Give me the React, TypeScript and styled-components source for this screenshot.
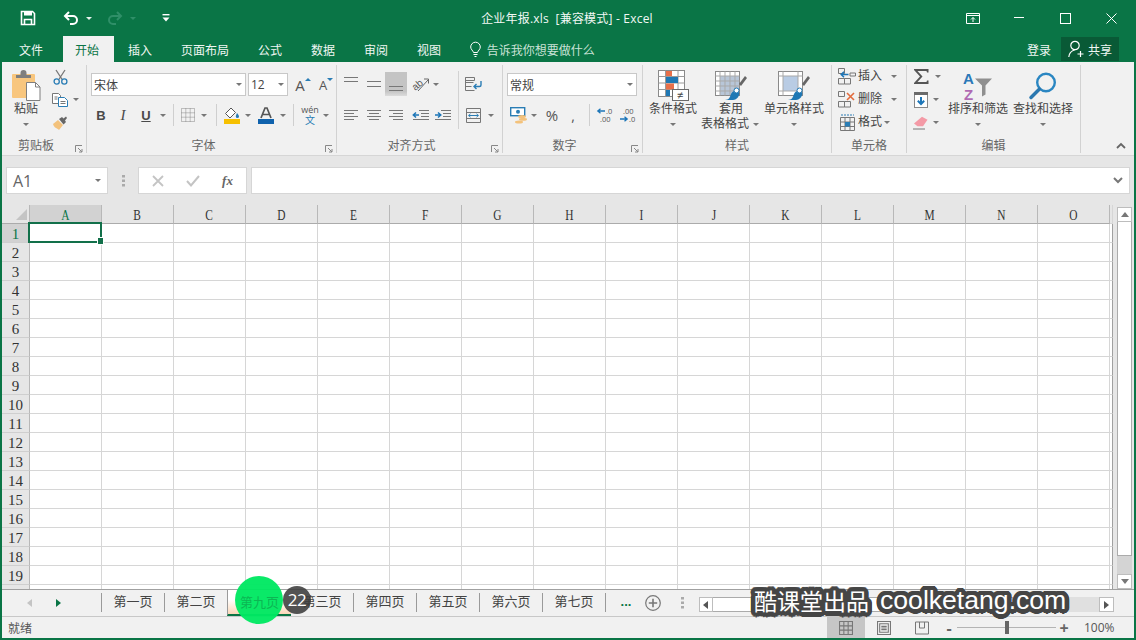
import React from 'react';
import styled, { createGlobalStyle } from 'styled-components';

const GREEN = '#0a7546';
const BLUE = '#2a7db5';

// round halo behind the watermark letters
const ring = (r: number, n: number) =>
  Array.from({ length: n }, (_, i) => {
    const a = (i / n) * Math.PI * 2;
    return `${(Math.cos(a) * r).toFixed(2)}px ${(Math.sin(a) * r).toFixed(2)}px 0 #454545`;
  }).join(', ');
const HALO = `${ring(4.5, 24)}, ${ring(2.5, 12)}`;

const Global = createGlobalStyle`
  html, body { margin: 0; padding: 0; overflow: hidden; }
  body {
    font-family: "Liberation Sans", "Noto Sans CJK SC", sans-serif;
    font-size: 12px;
    color: #444;
  }
  * { box-sizing: border-box; }
  svg { display: block; overflow: visible; }
`;

const Window = styled.div`
  position: relative;
  width: 1136px;
  height: 640px;
  padding: 0 2px 2px;
  background: ${GREEN};
  display: flex;
  flex-direction: column;
  overflow: hidden;
`;

/* title bar */
const TitleBar = styled.div`
  height: 36px;
  display: grid;
  grid-template-columns: 1fr auto 1fr;
  align-items: center;
  color: #fff;
`;
const Qat = styled.div`
  display: flex;
  align-items: center;
  padding-left: 14px;
`;
const QatBtn = styled.div<{ $w: number; $ml?: number }>`
  width: ${p => p.$w}px;
  margin-left: ${p => p.$ml || 0}px;
  display: flex;
  justify-content: center;
`;
const QatCaret = styled.span<{ $dim?: boolean }>`
  border: 3px solid transparent;
  border-top: 3px solid ${p => (p.$dim ? '#2f8f68' : '#e8f3ee')};
  border-bottom: 0;
`;
const Title = styled.div`
  font-family: "Open Sans", "Noto Sans CJK SC", sans-serif;
  font-size: 12px;
  letter-spacing: 0.2px;
  color: #f2f8f5;
  white-space: pre;
  margin-right: 2px;
`;
const WinControls = styled.div`
  display: flex;
  justify-content: flex-end;
`;
const WinBtn = styled.div`
  width: 46px;
  height: 36px;
  display: flex;
  align-items: center;
  justify-content: center;
`;

/* tab strip */
const TabStrip = styled.div`
  height: 26px;
  display: flex;
  align-items: stretch;
  padding-left: 2.5px;
  color: #f0f7f3;
`;
const RibbonTab = styled.div<{ $active?: boolean; $file?: boolean }>`
  display: flex;
  align-items: center;
  padding: ${p => (p.$active ? '0 14.5px 0 12px' : '0 14.5px')};
  margin-right: ${p => (p.$file ? 5.5 : 0)}px;
  background: ${p => (p.$active ? '#f1f1f1' : 'transparent')};
  color: ${p => (p.$active ? GREEN : 'inherit')};
`;
const TellMe = styled.div`
  display: flex;
  align-items: center;
  gap: 6px;
  margin-left: 14px;
  color: #c9e2d6;
`;
const Account = styled.div`
  margin-left: auto;
  display: flex;
  align-items: center;
  padding-right: 15px;
`;
const SignIn = styled.span`
  margin-right: 10px;
`;
const Share = styled.div`
  width: 58px;
  height: 24px;
  background: #095a36;
  display: flex;
  align-items: center;
  gap: 3px;
  padding-left: 7px;
`;

/* ribbon */
const Ribbon = styled.div`
  height: 94px;
  padding-top: 3px;
  background: #f1f1f1;
  border-bottom: 1px solid #d6d6d6;
  display: flex;
`;
const Group = styled.div<{ $w: number }>`
  position: relative;
  width: ${p => p.$w}px;
  height: 88px;
  border-right: 1px solid #d2d2d2;
  display: flex;
  flex-direction: column;
`;
const GroupBody = styled.div<{ $pl?: number; $col?: boolean }>`
  flex: 1;
  display: flex;
  flex-direction: ${p => (p.$col ? 'column' : 'row')};
  padding-left: ${p => p.$pl || 0}px;
`;
const GroupLabel = styled.div<{ $launcher?: boolean }>`
  height: 16px;
  line-height: 18px;
  padding-right: ${p => (p.$launcher ? 16 : 0)}px;
  text-align: center;
  color: #666;
`;
const Launcher = styled.div`
  position: absolute;
  right: 3px;
  bottom: 0;
`;
const Collapse = styled.div`
  flex: 1;
  display: flex;
  justify-content: flex-end;
  align-items: flex-end;
  padding: 0 8px 6px 0;
`;
const ToolRow = styled.div<{ $mt?: number; $h?: number }>`
  display: flex;
  align-items: center;
  height: ${p => p.$h || 22}px;
  margin-top: ${p => p.$mt || 0}px;
`;
const Tool = styled.div<{ $w: number; $ml?: number; $on?: boolean }>`
  width: ${p => p.$w}px;
  height: ${p => (p.$on ? '24px' : '100%')};
  margin-left: ${p => p.$ml || 0}px;
  display: flex;
  align-items: center;
  justify-content: center;
  background: ${p => (p.$on ? 'linear-gradient(#c4c4c4 80%, #dcdcdc)' : 'transparent')};
`;
const Caret = styled.span<{ $w?: number; $ml?: number }>`
  flex: none;
  width: ${p => p.$w || 10}px;
  margin-left: ${p => p.$ml || 0}px;
  display: flex;
  justify-content: center;
  &::before {
    content: '';
    border: 3px solid transparent;
    border-top: 3px solid #777;
    border-bottom: 0;
  }
`;
const VSep = styled.span<{ $ml: number; $mr: number }>`
  flex: none;
  width: 1px;
  height: 22px;
  background: #cfcfcf;
  margin: 0 ${p => p.$mr}px 0 ${p => p.$ml}px;
`;
const Combo = styled.div<{ $w: number; $ml?: number }>`
  width: ${p => p.$w}px;
  height: 23px;
  margin-left: ${p => p.$ml || 0}px;
  background: #fff;
  border: 1px solid #c8c8c8;
  display: flex;
  align-items: center;
  justify-content: space-between;
  padding: 0 2px;
  color: #444;
  font-size: 12px;
`;
const Size = styled.span`
  font-family: "Open Sans", sans-serif;
`;
const FontGlyph = styled.span<{ $i?: boolean; $u?: boolean }>`
  font-family: ${p => (p.$i ? '"Liberation Serif"' : '"Liberation Sans"')};
  font-weight: ${p => (p.$i ? 400 : 700)};
  font-style: ${p => (p.$i ? 'italic' : 'normal')};
  text-decoration: ${p => (p.$u ? 'underline' : 'none')};
  font-size: ${p => (p.$i ? 15 : 13)}px;
  color: #4a4a4a;
`;
const Phonetic = styled.span`
  display: flex;
  flex-direction: column;
  align-items: center;
  font-family: "Open Sans", "Noto Sans CJK SC", sans-serif;
  font-size: 9px;
  line-height: 10px;
  color: #555;
  b {
    font-weight: 400;
    font-size: 10px;
    line-height: 11px;
    color: ${BLUE};
  }
`;
const Grow = styled.span<{ $size: number }>`
  position: relative;
  font-family: "Open Sans", sans-serif;
  font-size: ${p => p.$size}px;
  color: #555;
  line-height: 16px;
`;
const GrowMark = styled.i<{ $up?: boolean }>`
  position: absolute;
  top: 1px;
  right: -6px;
  border: 3px solid transparent;
  ${p =>
    p.$up
      ? `border-bottom: 3px solid ${BLUE}; border-top: 0;`
      : `border-top: 3px solid ${BLUE}; border-bottom: 0;`}
`;
const NumGlyph = styled.span<{ $size: number }>`
  font-family: "Open Sans", sans-serif;
  font-size: ${p => p.$size}px;
  color: #555;
`;
const AlignBlock = styled.div<{ $w: number; $line?: boolean }>`
  width: ${p => p.$w}px;
  height: 58px;
  margin-top: 6px;
  border-right: ${p => (p.$line ? '1px solid #d2d2d2' : '0')};
`;
const BigBtn = styled.div<{ $w: number; $ml?: number }>`
  width: ${p => p.$w}px;
  margin-left: ${p => p.$ml || 0}px;
  padding-top: 4px;
  display: flex;
  flex-direction: column;
  align-items: center;
  color: #444;
`;
const BigIcon = styled.div`
  height: 33px;
  display: flex;
  align-items: center;
`;
const BigText = styled.div`
  height: 15px;
  line-height: 15px;
  display: flex;
  align-items: center;
  white-space: nowrap;
`;
const BigCaret = styled(Caret)`
  height: 14px;
  align-items: center;
`;
const SmallCol = styled.div<{ $w: number }>`
  width: ${p => p.$w}px;
  display: flex;
  flex-direction: column;
`;
const SmallRow = styled.div<{ $pl?: number }>`
  height: 23px;
  display: flex;
  align-items: center;
  padding-left: ${p => p.$pl || 0}px;
`;
const SmallIcon = styled.div<{ $w: number }>`
  width: ${p => p.$w}px;
  display: flex;
  justify-content: center;
`;
const SmallLabel = styled.span`
  margin-left: 1px;
  width: 24px;
  line-height: 15px;
  white-space: nowrap;
`;

/* formula bar */
const FormulaRow = styled.div`
  height: 49px;
  background: #e6e6e6;
  padding: 11px 4px 11px;
  display: flex;
`;
const Box = styled.div<{ $w?: number }>`
  ${p => (p.$w ? `width: ${p.$w}px;` : 'flex: 1;')}
  height: 27px;
  background: #fff;
  border: 1px solid #d6d6d6;
  display: flex;
  align-items: center;
`;
const NameBox = styled(Box)`
  justify-content: space-between;
  padding: 0 5px 0 6px;
  font-family: "Open Sans", sans-serif;
  font-size: 16px;
  color: #666;
`;
const FxBox = styled(Box)`
  margin-right: 4px;
  justify-content: space-around;
  padding: 0 2px;
`;
const FormulaBox = styled(Box)`
  justify-content: flex-end;
  padding-right: 6px;
`;
const Grip = styled.div`
  width: 30px;
  display: flex;
  justify-content: center;
  align-items: center;
`;
const Fx = styled.span`
  font-family: "Liberation Serif", serif;
  font-style: italic;
  font-weight: 700;
  font-size: 13px;
  color: #666;
`;

/* sheet */
const SheetArea = styled.div`
  flex: 1;
  min-height: 0;
  background: #e6e6e6;
  display: flex;
`;
const Grid = styled.div`
  width: 1111px;
  height: 384px;
  overflow: hidden;
  background: #fff;
  display: grid;
  grid-template-columns: 28px repeat(15, 72px) 3px;
  grid-template-rows: 19px;
  grid-auto-rows: 19px;
`;
const Corner = styled.div`
  background: #e6e6e6;
  border-right: 1px solid #b8b8b8;
  border-bottom: 1px solid #ababab;
  display: flex;
  align-items: flex-end;
  justify-content: flex-end;
  padding: 0 2px 3px 0;
`;
const ColHead = styled.div<{ $active?: boolean }>`
  background: ${p => (p.$active ? '#d2d2d2' : '#e6e6e6')};
  color: ${p => (p.$active ? GREEN : '#333')};
  border-right: 1px solid #b8b8b8;
  border-bottom: 1px solid ${p => (p.$active ? GREEN : '#ababab')};
  font-family: "Liberation Serif", serif;
  font-size: 15px;
  line-height: 21px;
  text-align: center;
`;
const ColLetter = styled.span`
  display: inline-block;
  transform: scaleX(0.76);
`;
const RowHead = styled.div<{ $active?: boolean }>`
  background: ${p => (p.$active ? '#d2d2d2' : '#e6e6e6')};
  color: ${p => (p.$active ? GREEN : '#333')};
  border-right: 1px solid #b8b8b8;
  border-bottom: 1px solid #cfcfcf;
  font-family: "Liberation Serif", serif;
  font-size: 15px;
  line-height: 20px;
  text-align: center;
`;
const Cell = styled.div<{ $edge?: boolean; $selected?: boolean }>`
  position: ${p => (p.$selected ? 'relative' : 'static')};
  border-right: 1px solid ${p => (p.$edge ? '#a0a0a0' : '#d6d6d6')};
  border-bottom: 1px solid #d6d6d6;
`;
const Selection = styled.div`
  position: absolute;
  z-index: 2;
  inset: -2px -1px -1px -2px;
  border: 2px solid #12704a;
  &::after {
    content: '';
    position: absolute;
    right: -3px;
    bottom: -3px;
    width: 5px;
    height: 6px;
    background: #12704a;
    outline: 1px solid #fff;
  }
`;
const VScroll = styled.div`
  width: 21px;
  padding: 2px 2px 0 4px;
  display: flex;
  flex-direction: column;
`;
const ScrollBtn = styled.div<{ $w?: number }>`
  flex: none;
  ${p => (p.$w ? `width: ${p.$w}px;` : 'height: 15px;')}
  background: #fff;
  border: 1px solid #bdbdbd;
  display: flex;
  align-items: center;
  justify-content: center;
`;
const VThumb = styled.div`
  height: 334px;
  background: #fff;
  border: 1px solid #ababab;
  border-top: 0;
`;
const VTrack = styled.div`
  flex: 1;
  background: #d4d4d4;
`;

/* sheet tabs */
const TabBar = styled.div`
  height: 27px;
  background: #f1f1f1;
  border-top: 1px solid #a0a0a0;
  display: flex;
  align-items: flex-start;
`;
const SheetNav = styled.div`
  width: 99px;
  height: 26px;
  display: flex;
  align-items: center;
`;
const SheetTab = styled.div<{ $first?: boolean }>`
  width: ${p => (p.$first ? 64 : 63)}px;
  height: 19px;
  margin-top: 3px;
  border-right: 1px solid #9a9a9a;
  border-left: ${p => (p.$first ? '1px solid #9a9a9a' : '0')};
  text-align: center;
  line-height: 17px;
  font-size: 13px;
  color: #444;
`;
const ActiveSheetTab = styled.div`
  width: 64px;
  height: 26px;
  margin-left: -1px;
  border-left: 1px solid #9a9a9a;
  border-bottom: 2px solid ${GREEN};
  background: linear-gradient(#fff 40%, #fbd7b8);
  text-align: center;
  line-height: 25px;
  font-size: 13px;
`;
const ActiveLabel = styled.span`
  position: relative;
  z-index: 2;
  color: #0cb653;
`;
const More = styled.div`
  width: 40px;
  height: 26px;
  line-height: 24px;
  text-align: center;
  font-weight: 700;
  font-size: 13px;
  color: ${GREEN};
`;
const PlusBtn = styled.div`
  width: 14px;
  height: 26px;
  display: flex;
  align-items: center;
  justify-content: center;
  flex: none;
`;
const Dots = styled.div`
  width: 3px;
  height: 26px;
  margin: 0 15px 0 21px;
  display: flex;
  align-items: center;
`;
const HScroll = styled.div`
  width: 415px;
  height: 15px;
  margin-top: 7px;
  background: #e0e0e0;
  display: flex;
`;
const HThumb = styled.div`
  width: 300px;
  background: #fff;
  border: 1px solid #ababab;
  border-left: 0;
`;
const HSpacer = styled.div`
  flex: 1;
`;

/* status bar */
const StatusBar = styled.div`
  height: 22px;
  background: #f1f1f1;
  border-top: 1px solid #c8c8c8;
  display: flex;
  align-items: center;
  padding: 0 18px 0 6px;
  color: #555;
`;
const ViewBtns = styled.div`
  margin-left: auto;
  display: flex;
  height: 100%;
`;
const ViewBtn = styled.div<{ $on?: boolean }>`
  width: 38px;
  display: flex;
  align-items: center;
  justify-content: center;
  background: ${p => (p.$on ? '#c6c6c6' : 'transparent')};
`;
const ZoomMark = styled.span`
  width: 16px;
  text-align: center;
  font-family: "Open Sans", sans-serif;
  font-size: 16px;
  line-height: 16px;
  font-weight: 700;
  color: #666;
`;
const Slider = styled.div`
  width: 99px;
  height: 13px;
  display: flex;
  justify-content: center;
  background: linear-gradient(#b4b4b4, #b4b4b4) center / 100% 1px no-repeat;
`;
const SliderThumb = styled.div`
  width: 4px;
  height: 13px;
  background: #666;
`;
const Percent = styled.span`
  width: 32px;
  margin-left: 12px;
  font-family: "Open Sans", sans-serif;
  font-size: 12px;
  color: #555;
`;

/* overlays */
const Touch = styled.div`
  position: absolute;
  z-index: 1;
  left: 235px;
  top: 576px;
  width: 48px;
  height: 48px;
  border-radius: 50%;
  background: rgba(0, 232, 98, 0.96);
`;
const Badge = styled.div`
  position: absolute;
  z-index: 1;
  left: 283px;
  top: 586px;
  width: 28px;
  height: 28px;
  border-radius: 50%;
  background: rgba(60, 60, 60, 0.88);
  color: #fff;
  font-family: "Open Sans", sans-serif;
  font-size: 17px;
  line-height: 27px;
  text-align: center;
  letter-spacing: -0.5px;
`;
const Watermark = styled.div`
  position: absolute;
  z-index: 3;
  left: 754px;
  top: 582px;
  height: 36px;
  display: flex;
  align-items: center;
  gap: 11px;
  color: #fff;
  white-space: nowrap;
  text-shadow: ${HALO};
`;
const WatermarkCn = styled.span`
  font-family: "Noto Sans CJK SC", sans-serif;
  font-size: 23px;
`;
const WatermarkEn = styled.span`
  font-family: "Liberation Sans", sans-serif;
  font-size: 26.6px;
`;

/* icons */
const SaveIcon = () => (
  <svg width="16" height="16" viewBox="0 0 16 16" fill="none" stroke="#fff" strokeWidth="1.6">
    <path d="M1.5 1.5h11l2 2v11h-13z" />
    <rect x="4" y="1.5" width="8" height="4" fill="#fff" stroke="none" />
    <path d="M4.5 14.5v-5h7v5" />
  </svg>
);
const UndoIcon = ({ dim, flip }: { dim?: boolean; flip?: boolean }) => (
  <svg width="16" height="15" viewBox="0 0 16 15" fill="none" stroke={dim ? '#2f8f68' : '#fff'} strokeWidth="2"
    style={flip ? { transform: 'scaleX(-1)' } : undefined}>
    <path d="M6 1L2 5l4 4M2 5h8a4 4 0 0 1 0 8H7" />
  </svg>
);
const CustomizeIcon = () => (
  <svg width="8" height="8" viewBox="0 0 8 8" fill="#fff">
    <rect x="0.5" y="0" width="7" height="1.4" />
    <path d="M0.5 3.5h7L4 7.5z" />
  </svg>
);
const RibbonDisplayIcon = () => (
  <svg width="14" height="11" viewBox="0 0 14 11" fill="none" stroke="#fff">
    <path d="M.5.5h13v10H.5zM.5 2.5h13M7 9V4.5M5 6.5l2-2 2 2" />
  </svg>
);
const MinIcon = () => (
  <svg width="10" height="2" viewBox="0 0 10 2"><rect width="10" height="1" fill="#fff" /></svg>
);
const MaxIcon = () => (
  <svg width="11" height="11" viewBox="0 0 11 11" fill="none" stroke="#fff"><rect x=".5" y=".5" width="10" height="10" /></svg>
);
const CloseIcon = () => (
  <svg width="11" height="11" viewBox="0 0 11 11" fill="none" stroke="#fff"><path d="M.5.5l10 10M10.5.5l-10 10" /></svg>
);
const BulbIcon = () => (
  <svg width="11" height="15" viewBox="0 0 11 15" fill="none" stroke="#fff">
    <path d="M3.5 10.5C3 8.5 .7 7.5.7 5a4.8 4.8 0 0 1 9.6 0c0 2.5-2.3 3.5-2.8 5.5zM3.5 12.5h4M4.5 14.5h2" />
  </svg>
);
const ShareIcon = () => (
  <svg width="17" height="18" viewBox="0 0 17 18" fill="none" stroke="#fff" strokeWidth="1.2">
    <circle cx="7" cy="5.5" r="4.2" />
    <path d="M.8 17c.2-3.5 2.5-6 6.2-7.2M9.5 14h6M12.5 11v6" />
  </svg>
);
const PasteIcon = () => (
  <svg width="29" height="30" viewBox="0 0 29 30">
    <rect x="0" y="3" width="23" height="24" rx="1" fill="#f8c67e" />
    <path d="M4 7V4h4.5V2a3 3 0 0 1 6 0v2H19v3z" fill="#7f7f7f" />
    <path d="M14.5 11.5h9l4.5 4.5v13.5H14.5z" fill="#fff" stroke="#7f7f7f" />
    <path d="M23.5 11.5v4.5H28" fill="none" stroke="#7f7f7f" />
  </svg>
);
const CutIcon = () => (
  <svg width="15" height="16" viewBox="0 0 15 16" fill="none">
    <path d="M3 1l6.5 10M12 1L5.5 11" stroke="#777" strokeWidth="1.3" />
    <circle cx="3.7" cy="12.5" r="2.6" stroke={BLUE} strokeWidth="1.3" />
    <circle cx="11.3" cy="12.5" r="2.6" stroke={BLUE} strokeWidth="1.3" />
  </svg>
);
const CopyIcon = () => (
  <svg width="16" height="14" viewBox="0 0 16 14" fill="#fff">
    <path d="M.5.5h6l2 2v8H.5z" stroke="#777" />
    <path d="M6.5 4.5h6l3 3v6h-9z" stroke={BLUE} />
    <path d="M8.5 8.5h5M8.5 10.5h5M2.5 4h3M2.5 6h3" stroke="#777" fill="none" />
  </svg>
);
const BrushIcon = () => (
  <svg width="16" height="15" viewBox="0 0 16 15">
    <path d="M1 9l5-4 5 5-4 5C5 13 2 13 1 9z" fill="#f3c27c" />
    <path d="M7 4l3-2 1.5 1.5L14 1.5 15 3l-2 2.5 1 1.5-2.5 2.5z" fill="#666" />
  </svg>
);
const BordersIcon = () => (
  <svg width="14" height="14" viewBox="0 0 14 14" fill="none" stroke="#888" strokeDasharray="1 1">
    <rect x=".5" y=".5" width="13" height="13" />
    <path d="M.5 4.8h13M.5 9.2h13M4.8.5v13M9.2.5v13" />
  </svg>
);
const FillIcon = () => (
  <svg width="17" height="17" viewBox="0 0 17 17">
    <path d="M7 1L1.5 6.5 6 11l5.5-5.5z" fill="#fff" stroke="#555" />
    <path d="M13 6c1.2 1.5 2 2.5 2 3.4a1.6 1.6 0 0 1-3.2 0c0-.6.4-1.4 1.2-3.4z" fill={BLUE} />
    <rect x="0" y="12" width="16" height="5" fill="#f6c000" />
  </svg>
);
const FontColorIcon = () => (
  <svg width="16" height="17" viewBox="0 0 16 17">
    <path d="M3 11l4-10h2l4 10M4.6 7.5h6.8" fill="none" stroke="#555" strokeWidth="1.7" />
    <rect x="0" y="12" width="16" height="5" fill="#0f62ad" />
  </svg>
);
const Lines = ({ rows, size = 14, tall = 14 }: { rows: [number, number, number][]; size?: number; tall?: number }) => (
  <svg width={size} height={tall} viewBox={`0 0 ${size} ${tall}`} stroke="#777">
    {rows.map(([x, y, w], i) => (
      <path key={i} d={`M${x} ${y + 0.5}h${w}`} />
    ))}
  </svg>
);
const ORIENT_ROWS: [number, number, number][][] = [
  [[0, 0, 14], [0, 4, 14]],
  [[0, 4, 14], [0, 9, 14]],
  [[0, 9, 14], [0, 13, 14]],
];
const H_ROWS: [number, number, number][][] = [
  [[0, 1, 14], [0, 4, 10], [0, 7, 14], [0, 10, 10]],
  [[0, 1, 14], [2, 4, 10], [0, 7, 14], [2, 10, 10]],
  [[0, 1, 14], [4, 4, 10], [0, 7, 14], [4, 10, 10]],
];
const OrientIcon = () => (
  <svg width="16" height="15" viewBox="0 0 16 15">
    <text x="0" y="12" fontSize="10" fontFamily="Liberation Sans" fill="#555" transform="rotate(-40 4 10)">ab</text>
    <path d="M5 14L15 3M11 2h4.5v4.5" fill="none" stroke="#666" />
  </svg>
);
const WrapIcon = () => (
  <svg width="17" height="15" viewBox="0 0 17 15" fill="none">
    <path d="M.5.5h9v3h-9zM.5 5.5h8M.5 9.5h6M.5 13.5h9M.5.5v13" stroke="#777" />
    <path d="M16 4v4a1.5 1.5 0 0 1-1.5 1.5H9M11.5 7L9 9.5l2.5 2.5" stroke={BLUE} strokeWidth="1.4" />
  </svg>
);
const MergeIcon = () => (
  <svg width="15" height="15" viewBox="0 0 15 15" fill="none">
    <path d="M.5.5h14v14H.5zM.5 4.5h14M.5 10.5h14" stroke="#777" />
    <path d="M2.5 7.5h10M4.5 5.8L2.7 7.5l1.8 1.7M10.5 5.8l1.8 1.7-1.8 1.7" stroke={BLUE} />
  </svg>
);
const IndentIcon = ({ grow }: { grow?: boolean }) => (
  <svg width="16" height="12" viewBox="0 0 16 12" fill="none">
    <path d="M6 1.5h10M8 4.5h8M8 7.5h8M0 10.5h16" stroke="#777" />
    {grow
      ? <path d="M0 6h5.5M3 3.5L5.8 6 3 8.5" stroke="#1d76b8" strokeWidth="1.5" />
      : <path d="M6 6H.6M3 3.5L.3 6 3 8.5" stroke="#1d76b8" strokeWidth="1.5" />}
  </svg>
);
const CurrencyIcon = () => (
  <svg width="18" height="17" viewBox="0 0 18 17">
    <rect x=".7" y=".7" width="14" height="8" fill="#fff" stroke={BLUE} strokeWidth="1.4" />
    <circle cx="8" cy="4.7" r="2" fill={BLUE} />
    <ellipse cx="12" cy="9.5" rx="4" ry="1.5" fill="#f3c27c" />
    <ellipse cx="13" cy="12.3" rx="4" ry="1.5" fill="#f3c27c" />
    <ellipse cx="9" cy="15" rx="4" ry="1.5" fill="#f3c27c" />
  </svg>
);
const DecimalIcon = ({ more }: { more?: boolean }) => (
  <svg width="15" height="15" viewBox="0 0 15 15" fontFamily="Open Sans" fontSize="7.5" fill="#555">
    {more ? (
      <>
        <text x="3" y="6">.00</text>
        <text x="9" y="14">.0</text>
        <path d="M0 11h7M4.5 8.7L7.2 11l-2.7 2.3" stroke="#1d76b8" strokeWidth="1.3" fill="none" />
      </>
    ) : (
      <>
        <path d="M8 3H1M3.5.7L.8 3l2.7 2.3" stroke="#1d76b8" strokeWidth="1.3" fill="none" />
        <text x="9" y="6">.0</text>
        <text x="3" y="14">.00</text>
      </>
    )}
  </svg>
);
const CondFormatIcon = () => (
  <svg width="31" height="31" viewBox="0 0 31 31">
    <rect x=".5" y=".5" width="26" height="26" fill="#fff" stroke="#8a8a8a" />
    <path d="M.5 6.5h26M.5 13h26M.5 19.5h26M7.5.5v26M20 .5v26" stroke="#9a9a9a" fill="none" />
    <rect x="8" y="1" width="6" height="5" fill="#e8704a" />
    <rect x="8" y="7" width="12" height="6" fill="#1f78b4" />
    <rect x="8" y="13.5" width="8" height="6" fill="#e8704a" />
    <rect x="8" y="20" width="4" height="6" fill="#1f78b4" />
    <rect x="14.5" y="19.5" width="16" height="11" fill="#fff" stroke="#6a6a6a" />
    <text x="19" y="29" fontSize="11" fontFamily="Liberation Sans" fill="#444">≠</text>
  </svg>
);
const StyleBrushIcon = ({ header }: { header?: boolean }) => (
  <svg width="33" height="31" viewBox="0 0 33 31">
    <rect x=".5" y="1.5" width="24" height="24" fill="#fff" stroke="#8a8a8a" />
    {header
      ? <rect x="5" y="6" width="15" height="15" fill="#b9cce4" />
      : <rect x="5" y="6" width="19" height="19" fill="#b8c6d8" />}
    <path d="M.5 6h24M.5 11h24M.5 16h24M.5 21h24M5 1.5v24M10 1.5v24M15 1.5v24M20 1.5v24"
      stroke={header ? 'none' : '#a9a9a9'} fill="none" />
    {header && <path d="M.5 6h24M.5 21h24M5 1.5v24M20 1.5v24" stroke="#a9a9a9" fill="none" />}
    <path d="M24 14l6-8 2 2-6 8z" fill="#666" />
    <path d="M10 30c4 0 5-3 6-6 1.500-3 6-5 8-2 1.500 3-2 8-6 8z" fill="#1f78b4" />
    <circle cx="21.500" cy="20.500" r="2.500" fill="#fff" stroke="#1f78b4" />
  </svg>
);
const InsertIcon = () => (
  <svg width="18" height="17" viewBox="0 0 18 17" fill="none" stroke="#777">
    <path d="M.5.5h6v5h-6zM.5 10.500h6v5.500h-6zM6.500 10.500h6v5.500h-6zM12 5h5.500v3H12z" />
    <path d="M10.500 6.500H3.500M6 3.800L3.200 6.500 6 9.200" stroke="#1d76b8" strokeWidth="1.500" />
  </svg>
);
const DeleteIcon = () => (
  <svg width="18" height="17" viewBox="0 0 18 17" fill="none" stroke="#777">
    <path d="M.5.5h6v5h-6zM.5 10.500h6v5.500h-6zM6.500 10.500h6v5.500h-6z" />
    <path d="M9 2l7 7M16 2L9 9" stroke="#e26b3c" strokeWidth="1.600" />
  </svg>
);
const FormatIcon = () => (
  <svg width="15" height="17" viewBox="0 0 15 17" fill="none">
    <path d="M.5 3.500h14v13H.5zM.5 8h14M.5 12.500h14M5 3.500v13M10 3.500v13" stroke="#777" />
    <path d="M1 1h13" stroke={BLUE} strokeDasharray="2 1" />
    <rect x="5" y="8" width="5" height="4.500" fill={BLUE} />
  </svg>
);
const SumIcon = () => (
  <svg width="15" height="15" viewBox="0 0 15 15">
    <path d="M0 0h14.500v3.500h-1.500L12.500 2H3.500l5 5.500-5 5.500h9l.5-1.500h1.500V15H0v-1l6-6.500L0 1z" fill="#555" />
  </svg>
);
const FillDownIcon = () => (
  <svg width="14" height="16" viewBox="0 0 14 16">
    <rect x=".5" y=".5" width="13" height="15" fill="#fff" stroke="#888" />
    <rect x="0" y="0" width="14" height="3" fill="#6a6a6a" />
    <path d="M7 5v7M3.800 8.800L7 12l3.200-3.200" fill="none" stroke="#1d76b8" strokeWidth="2" />
  </svg>
);
const EraserIcon = () => (
  <svg width="16" height="14" viewBox="0 0 16 14">
    <path d="M9 .8l5.500 3-4.500 6.500H4.500L1 7.500z" fill="#f49aa6" />
    <path d="M0 13h12" stroke="#777" />
  </svg>
);
const SortIcon = () => (
  <svg width="30" height="31" viewBox="0 0 30 31" fontWeight="700">
    <text x="0" y="14" fontSize="15" fontFamily="Liberation Sans" fill="#2a78b8">A</text>
    <text x="1" y="30" fontSize="15" fontFamily="Liberation Sans" fill="#b06ab3">Z</text>
    <path d="M12 8.500h17l-6.500 7v9l-3.500 2v-11z" fill="#8f8f8f" />
  </svg>
);
const FindIcon = () => (
  <svg width="28" height="28" viewBox="0 0 28 28" fill="none">
    <circle cx="17" cy="10.500" r="8.800" stroke="#2a86c2" strokeWidth="2.400" />
    <path d="M10.500 17L2 25.500" stroke="#2a78b0" strokeWidth="3.500" strokeLinecap="round" />
  </svg>
);
const LauncherIcon = () => (
  <svg width="8" height="8" viewBox="0 0 8 8" fill="none" stroke="#888">
    <path d="M.5 7V.5H7" />
    <path d="M3 3l4 4M7 4v3H4" />
  </svg>
);
const ChevronUp = () => (
  <svg width="10" height="7" viewBox="0 0 10 7" fill="none" stroke="#666" strokeWidth="1.800"><path d="M1 6l4-4 4 4" /></svg>
);
const ChevronDown = () => (
  <svg width="10" height="7" viewBox="0 0 10 7" fill="none" stroke="#777" strokeWidth="2"><path d="M1 1l4 4 4-4" /></svg>
);
const CrossMark = () => (
  <svg width="12" height="12" viewBox="0 0 12 12" fill="none" stroke="#c4c4c4" strokeWidth="1.800"><path d="M1 1l10 10M11 1L1 11" /></svg>
);
const CheckMark = () => (
  <svg width="14" height="12" viewBox="0 0 14 12" fill="none" stroke="#c4c4c4" strokeWidth="2"><path d="M1 6l4 4.500L13 1" /></svg>
);
const GripIcon = () => (
  <svg width="3" height="12" viewBox="0 0 3 12" fill="#aaa">
    <rect y="0" width="3" height="2.500" /><rect y="4.500" width="3" height="2.500" /><rect y="9" width="3" height="2.500" />
  </svg>
);
const Tri = ({ dir, color = '#555' }: { dir: 'l' | 'r' | 'u' | 'd'; color?: string }) => {
  const d = { l: 'M6 0v8L1 4z', r: 'M1 0v8l5-4z', u: 'M0 6h8L4 1z', d: 'M0 1h8L4 6z' }[dir];
  return <svg width="8" height="8" viewBox="0 0 8 8" fill={color}><path d={d} /></svg>;
};
const CornerIcon = () => (
  <svg width="11" height="11" viewBox="0 0 11 11" fill="#c4c4c4"><path d="M11 0v11H0z" /></svg>
);
const AddSheet = () => (
  <svg width="16" height="16" viewBox="0 0 16 16" fill="none" stroke="#777">
    <circle cx="8" cy="8" r="7.300" strokeWidth="1.200" />
    <path d="M8 3.800v8.400M3.800 8h8.400" strokeWidth="1.600" />
  </svg>
);
const NormalView = () => (
  <svg width="14" height="14" viewBox="0 0 13 13" fill="none" stroke="#777">
    <path d="M.5.5h12v12H.5zM4.500.5v12M8.500.5v12M.5 4.500h12M.5 8.500h12" />
  </svg>
);
const PageView = () => (
  <svg width="14" height="14" viewBox="0 0 13 13" fill="none" stroke="#777">
    <path d="M.5.5h12v12H.5zM2.500 2.500h8v8h-8zM4 5h5M4 6.500h5M4 8h5" />
  </svg>
);
const BreakView = () => (
  <svg width="14" height="14" viewBox="0 0 14 13" fill="none" stroke="#777">
    <path d="M.5.5h13v12H.5zM4.500.5v6h5V.5" />
  </svg>
);

const COLUMNS = 'ABCDEFGHIJKLMNO'.split('');
const ROWS = Array.from({ length: 20 }, (_, i) => i + 1);

function Sheet() {
  return (
    <Grid>
      <Corner><CornerIcon /></Corner>
      {COLUMNS.map(c => <ColHead key={c} $active={c === 'A'}><ColLetter>{c}</ColLetter></ColHead>)}
      <Cell as={Corner} />
      {ROWS.map(r => (
        <React.Fragment key={r}>
          <RowHead $active={r === 1}>{r < 20 ? r : ''}</RowHead>
          {COLUMNS.map((c, i) => (
            <Cell key={c} $selected={r === 1 && i === 0}>
              {r === 1 && i === 0 && <Selection />}
            </Cell>
          ))}
          <Cell $edge />
        </React.Fragment>
      ))}
    </Grid>
  );
}

function RibbonGroups() {
  return (
    <Ribbon>
      <Group $w={85}>
        <GroupBody>
          <BigBtn $w={48}>
            <BigIcon><PasteIcon /></BigIcon>
            <BigText>粘贴</BigText>
            <BigCaret />
          </BigBtn>
          <SmallCol $w={36}>
            <SmallRow><SmallIcon $w={20}><CutIcon /></SmallIcon></SmallRow>
            <SmallRow><SmallIcon $w={20}><CopyIcon /></SmallIcon><Caret $w={12} /></SmallRow>
            <SmallRow><SmallIcon $w={20}><BrushIcon /></SmallIcon></SmallRow>
          </SmallCol>
        </GroupBody>
        <GroupLabel $launcher>剪贴板</GroupLabel>
        <Launcher><LauncherIcon /></Launcher>
      </Group>

      <Group $w={250}>
        <GroupBody $col $pl={3}>
          <ToolRow $mt={8} $h={23}>
            <Combo $w={155} $ml={1}>宋体<Caret $w={8} /></Combo>
            <Combo $w={40} $ml={2}><Size>12</Size><Caret $w={8} /></Combo>
            <Tool $w={20} $ml={2}><Grow $size={15}>A<GrowMark $up /></Grow></Tool>
            <Tool $w={20} $ml={3}><Grow $size={13}>A<GrowMark /></Grow></Tool>
          </ToolRow>
          <ToolRow $mt={8}>
            <Tool $w={22}><FontGlyph>B</FontGlyph></Tool>
            <Tool $w={22}><FontGlyph $i>I</FontGlyph></Tool>
            <Tool $w={24}><FontGlyph $u>U</FontGlyph></Tool>
            <Caret />
            <VSep $ml={5} $mr={5} />
            <Tool $w={18}><BordersIcon /></Tool>
            <Caret $w={14} />
            <VSep $ml={5} $mr={5} />
            <Tool $w={20}><FillIcon /></Tool>
            <Caret $w={12} />
            <Tool $w={24}><FontColorIcon /></Tool>
            <Caret />
            <VSep $ml={5} $mr={5} />
            <Tool $w={22}><Phonetic>wén<b>文</b></Phonetic></Tool>
            <Caret />
          </ToolRow>
        </GroupBody>
        <GroupLabel $launcher>字体</GroupLabel>
        <Launcher><LauncherIcon /></Launcher>
      </Group>

      <Group $w={166}>
        <GroupBody $pl={3}>
          <AlignBlock $w={119} $line>
            <ToolRow $h={26}>
              <Tool $w={22}><Lines rows={ORIENT_ROWS[0]} tall={15} /></Tool>
              <Tool $w={23}><Lines rows={ORIENT_ROWS[1]} tall={15} /></Tool>
              <Tool $w={22} $on><Lines rows={ORIENT_ROWS[2]} tall={15} /></Tool>
              <Tool $w={20} $ml={4}><OrientIcon /></Tool>
              <Caret />
            </ToolRow>
            <ToolRow $mt={7}>
              <Tool $w={22}><Lines rows={H_ROWS[0]} tall={12} /></Tool>
              <Tool $w={23}><Lines rows={H_ROWS[1]} tall={12} /></Tool>
              <Tool $w={22}><Lines rows={H_ROWS[2]} tall={12} /></Tool>
              <Tool $w={28}><IndentIcon /></Tool>
              <Tool $w={16}><IndentIcon grow /></Tool>
            </ToolRow>
          </AlignBlock>
          <AlignBlock $w={38}>
            <ToolRow $h={26}>
              <Tool $w={28}><WrapIcon /></Tool>
            </ToolRow>
            <ToolRow $mt={7}>
              <Tool $w={28}><MergeIcon /></Tool>
              <Caret $w={8} />
            </ToolRow>
          </AlignBlock>
        </GroupBody>
        <GroupLabel $launcher>对齐方式</GroupLabel>
        <Launcher><LauncherIcon /></Launcher>
      </Group>

      <Group $w={140}>
        <GroupBody $col $pl={4}>
          <ToolRow $mt={8} $h={23}>
            <Combo $w={130}>常规<Caret $w={8} /></Combo>
          </ToolRow>
          <ToolRow $mt={8}>
            <Tool $w={23}><CurrencyIcon /></Tool>
            <Caret $w={8} />
            <Tool $w={28}><NumGlyph $size={15}>%</NumGlyph></Tool>
            <Tool $w={14}><NumGlyph $size={14}>,</NumGlyph></Tool>
            <VSep $ml={9} $mr={3} />
            <Tool $w={22}><DecimalIcon /></Tool>
            <Tool $w={23} $ml={1}><DecimalIcon more /></Tool>
          </ToolRow>
        </GroupBody>
        <GroupLabel $launcher>数字</GroupLabel>
        <Launcher><LauncherIcon /></Launcher>
      </Group>

      <Group $w={189}>
        <GroupBody>
          <BigBtn $w={60}>
            <BigIcon><CondFormatIcon /></BigIcon>
            <BigText>条件格式</BigText>
            <BigCaret />
          </BigBtn>
          <BigBtn $w={56}>
            <BigIcon><StyleBrushIcon /></BigIcon>
            <BigText>套用</BigText>
            <BigText>表格格式<Caret $w={10} $ml={2} /></BigText>
          </BigBtn>
          <BigBtn $w={70}>
            <BigIcon><StyleBrushIcon header /></BigIcon>
            <BigText>单元格样式</BigText>
            <BigCaret />
          </BigBtn>
        </GroupBody>
        <GroupLabel>样式</GroupLabel>
      </Group>

      <Group $w={75}>
        <GroupBody>
          <SmallCol $w={74}>
            <SmallRow $pl={5}><SmallIcon $w={20}><InsertIcon /></SmallIcon><SmallLabel>插入</SmallLabel><Caret $ml={7} /></SmallRow>
            <SmallRow $pl={5}><SmallIcon $w={20}><DeleteIcon /></SmallIcon><SmallLabel>删除</SmallLabel><Caret $ml={7} /></SmallRow>
            <SmallRow $pl={5}><SmallIcon $w={20}><FormatIcon /></SmallIcon><SmallLabel>格式</SmallLabel><Caret /></SmallRow>
          </SmallCol>
        </GroupBody>
        <GroupLabel>单元格</GroupLabel>
      </Group>

      <Group $w={174}>
        <GroupBody>
          <SmallCol $w={38}>
            <SmallRow $pl={6}><SmallIcon $w={16}><SumIcon /></SmallIcon><Caret $w={10} $ml={4} /></SmallRow>
            <SmallRow $pl={6}><SmallIcon $w={16}><FillDownIcon /></SmallIcon><Caret $w={10} $ml={2} /></SmallRow>
            <SmallRow $pl={6}><SmallIcon $w={16}><EraserIcon /></SmallIcon><Caret $w={10} $ml={2} /></SmallRow>
          </SmallCol>
          <BigBtn $w={60} $ml={3}>
            <BigIcon><SortIcon /></BigIcon>
            <BigText>排序和筛选</BigText>
            <BigCaret />
          </BigBtn>
          <BigBtn $w={60} $ml={5}>
            <BigIcon><FindIcon /></BigIcon>
            <BigText>查找和选择</BigText>
            <BigCaret />
          </BigBtn>
        </GroupBody>
        <GroupLabel>编辑</GroupLabel>
      </Group>

      <Collapse><ChevronUp /></Collapse>
    </Ribbon>
  );
}

export default function App() {
  return (
    <Window>
      <Global />
      <TitleBar>
        <Qat>
          <QatBtn $w={24}><SaveIcon /></QatBtn>
          <QatBtn $w={24} $ml={19}><UndoIcon /></QatBtn>
          <QatBtn $w={12}><QatCaret /></QatBtn>
          <QatBtn $w={24} $ml={8}><UndoIcon dim flip /></QatBtn>
          <QatBtn $w={12}><QatCaret $dim /></QatBtn>
          <QatBtn $w={14} $ml={20}><CustomizeIcon /></QatBtn>
        </Qat>
        <Title>企业年报.xls  [兼容模式] - Excel</Title>
        <WinControls>
          <WinBtn><RibbonDisplayIcon /></WinBtn>
          <WinBtn><MinIcon /></WinBtn>
          <WinBtn><MaxIcon /></WinBtn>
          <WinBtn><CloseIcon /></WinBtn>
        </WinControls>
      </TitleBar>

      <TabStrip>
        <RibbonTab $file>文件</RibbonTab>
        <RibbonTab $active>开始</RibbonTab>
        <RibbonTab>插入</RibbonTab>
        <RibbonTab>页面布局</RibbonTab>
        <RibbonTab>公式</RibbonTab>
        <RibbonTab>数据</RibbonTab>
        <RibbonTab>审阅</RibbonTab>
        <RibbonTab>视图</RibbonTab>
        <TellMe><BulbIcon />告诉我你想要做什么</TellMe>
        <Account>
          <SignIn>登录</SignIn>
          <Share><ShareIcon />共享</Share>
        </Account>
      </TabStrip>

      <RibbonGroups />

      <FormulaRow>
        <NameBox $w={102}>A1<Caret $w={8} /></NameBox>
        <Grip><GripIcon /></Grip>
        <FxBox $w={109}><CrossMark /><CheckMark /><Fx>fx</Fx></FxBox>
        <FormulaBox><ChevronDown /></FormulaBox>
      </FormulaRow>

      <SheetArea>
        <Sheet />
        <VScroll>
          <ScrollBtn><Tri dir="u" color="#777" /></ScrollBtn>
          <VThumb />
          <VTrack />
          <ScrollBtn><Tri dir="d" color="#777" /></ScrollBtn>
        </VScroll>
      </SheetArea>

      <TabBar>
        <SheetNav>
          <QatBtn $w={14} $ml={21}><Tri dir="l" color="#c4c4c4" /></QatBtn>
          <QatBtn $w={14} $ml={15}><Tri dir="r" color={GREEN} /></QatBtn>
        </SheetNav>
        <SheetTab $first>第一页</SheetTab>
        <SheetTab>第二页</SheetTab>
        <ActiveSheetTab><ActiveLabel>第九页</ActiveLabel></ActiveSheetTab>
        <SheetTab>第三页</SheetTab>
        <SheetTab>第四页</SheetTab>
        <SheetTab>第五页</SheetTab>
        <SheetTab>第六页</SheetTab>
        <SheetTab>第七页</SheetTab>
        <More>...</More>
        <PlusBtn><AddSheet /></PlusBtn>
        <Dots><GripIcon /></Dots>
        <HScroll>
          <ScrollBtn $w={14}><Tri dir="l" /></ScrollBtn>
          <HThumb />
          <HSpacer />
          <ScrollBtn $w={15}><Tri dir="r" /></ScrollBtn>
        </HScroll>
      </TabBar>

      <StatusBar>
        就绪
        <ViewBtns>
          <ViewBtn $on><NormalView /></ViewBtn>
          <ViewBtn><PageView /></ViewBtn>
          <ViewBtn><BreakView /></ViewBtn>
        </ViewBtns>
        <ZoomMark>-</ZoomMark>
        <Slider><SliderThumb /></Slider>
        <ZoomMark>+</ZoomMark>
        <Percent>100%</Percent>
      </StatusBar>

      <Touch />
      <Badge>22</Badge>
      <Watermark>
        <WatermarkCn>酷课堂出品</WatermarkCn>
        <WatermarkEn>coolketang.com</WatermarkEn>
      </Watermark>
    </Window>
  );
}
